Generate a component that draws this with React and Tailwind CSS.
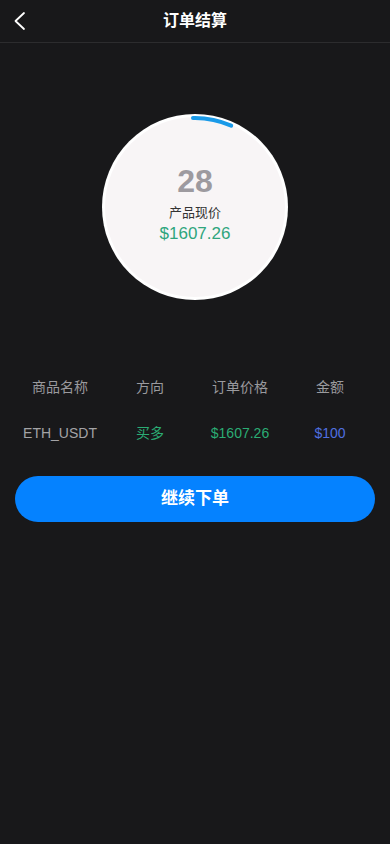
import React from "react";

const font = { fontFamily: '"Liberation Sans", "Noto Sans CJK SC", sans-serif' };

const cols = [
  { head: "商品名称", val: "ETH_USDT", cls: "text-[#a3a3a6]" },
  { head: "方向", val: "买多", cls: "text-[#2bac74]" },
  { head: "订单价格", val: "$1607.26", cls: "text-[#2bac74]" },
  { head: "金额", val: "$100", cls: "text-[#4f6fe0]" },
];

function Ring() {
  // arc from top, ~24deg clockwise
  const r = 89;
  const c = 93;
  const a = (24 * Math.PI) / 180;
  const ex = c + r * Math.sin(a);
  const ey = c - r * Math.cos(a);
  return (
    <svg width="186" height="186" viewBox="0 0 186 186" className="absolute inset-0">
      <path
        d={`M ${c - 2} ${c - r} A ${r} ${r} 0 0 1 ${ex} ${ey}`}
        fill="none"
        stroke="#1a9ae8"
        strokeWidth="4"
        strokeLinecap="round"
      />
    </svg>
  );
}

export default function App() {
  return (
    <div className="min-h-[844px] w-full bg-[#18181a] text-white" style={font}>
      <header className="relative flex h-[43px] items-center justify-center border-b border-[#2c2c2e]">
        <button className="absolute left-[9px] top-[7px] p-1">
          <svg width="14" height="20" viewBox="0 0 14 20" fill="none">
            <path d="M11 2 L2.5 10 L11 18" stroke="#ffffff" strokeWidth="1.8" strokeLinecap="round" strokeLinejoin="round" />
          </svg>
        </button>
        <h1 className="text-[16px] font-bold">订单结算</h1>
      </header>

      <div className="flex justify-center pt-[71px]">
        <div className="relative h-[186px] w-[186px] rounded-full bg-white p-[3px]">
          <div className="flex h-full w-full flex-col items-center justify-center rounded-full bg-[#f8f5f6] pb-[7px]">
            <span className="text-[32px] font-bold leading-none text-[#9d9a9f]">28</span>
            <span className="mt-[9px] text-[13px] leading-none text-[#333]">产品现价</span>
            <span className="mt-[6px] text-[17px] leading-none text-[#2fa57d]">$1607.26</span>
          </div>
          <Ring />
        </div>
      </div>

      <div className="mx-[15px] mt-[80px] grid grid-cols-4 text-center text-[14px]">
        {cols.map((c) => (
          <div key={c.head} className="flex flex-col items-center">
            <span className="leading-none text-[#9a9a9e]">{c.head}</span>
            <span className={`mt-[32px] leading-none ${c.cls}`}>{c.val}</span>
          </div>
        ))}
      </div>

      <div className="px-[15px] pt-[36px]">
        <button className="h-[46px] w-full rounded-full bg-[#0582ff] text-[17px] font-bold text-white">
          继续下单
        </button>
      </div>
    </div>
  );
}
